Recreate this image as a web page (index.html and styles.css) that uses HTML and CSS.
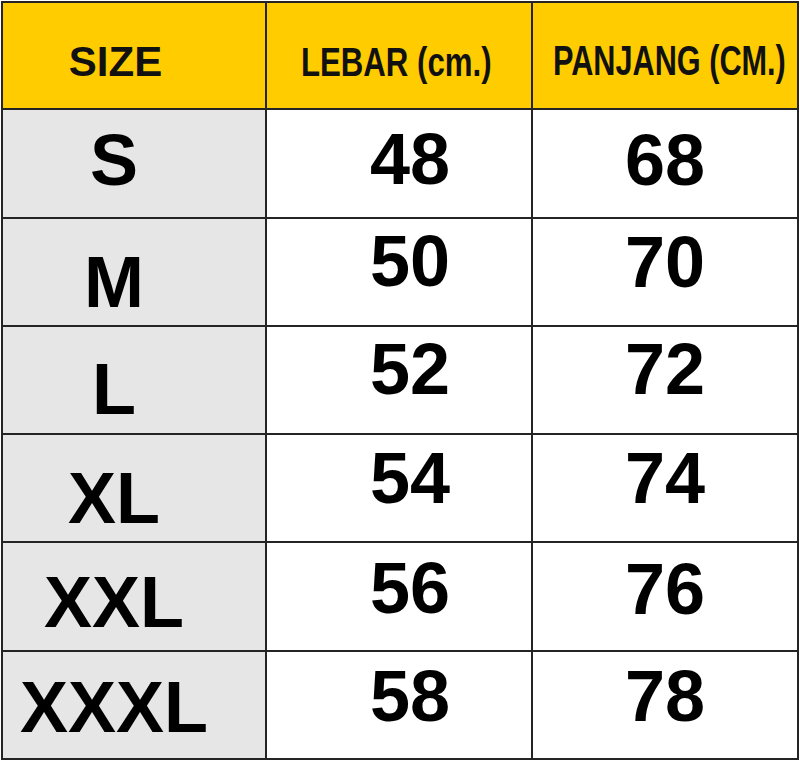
FILE: index.html
```html
<!DOCTYPE html>
<html lang="id">
<head>
<meta charset="utf-8">
<title>Size Chart</title>
<link rel="stylesheet" href="styles.css">
</head>
<body>
<div class="chart">
  <div class="cell head h1"><span class="lbl">SIZE</span></div>
  <div class="cell head h2"><span class="lbl narrow-a">LEBAR (cm.)</span></div>
  <div class="cell head h3"><span class="lbl narrow-b">PANJANG (CM.)</span></div>

  <div class="cell size rs">S</div>
  <div class="cell num n2 rs2">48</div>
  <div class="cell num n3 rs3">68</div>

  <div class="cell size rm">M</div>
  <div class="cell num n2 rm2">50</div>
  <div class="cell num n3 rm3">70</div>

  <div class="cell size rl">L</div>
  <div class="cell num n2 rl2">52</div>
  <div class="cell num n3 rl3">72</div>

  <div class="cell size rxl">XL</div>
  <div class="cell num n2 rxl2">54</div>
  <div class="cell num n3 rxl3">74</div>

  <div class="cell size rxxl">XXL</div>
  <div class="cell num n2 rxxl2">56</div>
  <div class="cell num n3 rxxl3">76</div>

  <div class="cell size rxxxl">XXXL</div>
  <div class="cell num n2 rxxxl2">58</div>
  <div class="cell num n3 rxxxl3">78</div>
</div>
</body>
</html>
```

FILE: styles.css
```css
html, body {
  margin: 0;
  padding: 0;
  background: #ffffff;
}

body {
  font-family: "Liberation Sans", Arial, sans-serif;
  font-weight: bold;
  color: #000;
}

.chart {
  margin: 1px 0 0 1px;
  width: 794px;
  display: grid;
  grid-template-columns: 262px 264px 264px;
  grid-template-rows: 105px 107px 106px 106px 106px 107px 106px;
  gap: 2px;
  padding: 2px;
  background: #242424;
}

.cell {
  display: flex;
  justify-content: center;
  align-items: flex-start;
  white-space: nowrap;
  overflow: visible;
  box-sizing: border-box;
}

.head {
  background: #ffcc00;
  color: #111;
}

.lbl {
  display: inline-block;
  line-height: 1;
}

.h1 { font-size: 42px; padding: 38px 37px 0 0; }
.h2 { font-size: 40px; padding: 39px 5px 0 0; }
.h3 { font-size: 42px; padding: 37px 0 0 9px; }

.narrow-a { transform: scaleX(0.78); }
.narrow-b { transform: scaleX(0.73); }

.size {
  background: #e6e6e6;
  font-size: 72px;
  line-height: 72px;
  padding-right: 40px;
}

.num {
  background: #ffffff;
  font-size: 72px;
  line-height: 72px;
}

.n2 { padding-left: 22px; }
.n3 { padding-left: 0; }

.rs { padding-top: 14px; }
.rm { padding-top: 27px; }
.rl { padding-top: 26px; }
.rxl { padding-top: 27px; }
.rxxl { padding-top: 23px; }
.rxxxl { padding-top: 19px; }

.rs2 { padding-top: 13px; }
.rm2 { padding-top: 6px; }
.rl2 { padding-top: 6px; }
.rxl2 { padding-top: 7px; }
.rxxl2 { padding-top: 9px; }
.rxxxl2 { padding-top: 8px; }

.rs3 { padding-top: 14px; }
.rm3 { padding-top: 7px; }
.rl3 { padding-top: 6px; }
.rxl3 { padding-top: 7px; }
.rxxl3 { padding-top: 10px; }
.rxxxl3 { padding-top: 8px; }
```
